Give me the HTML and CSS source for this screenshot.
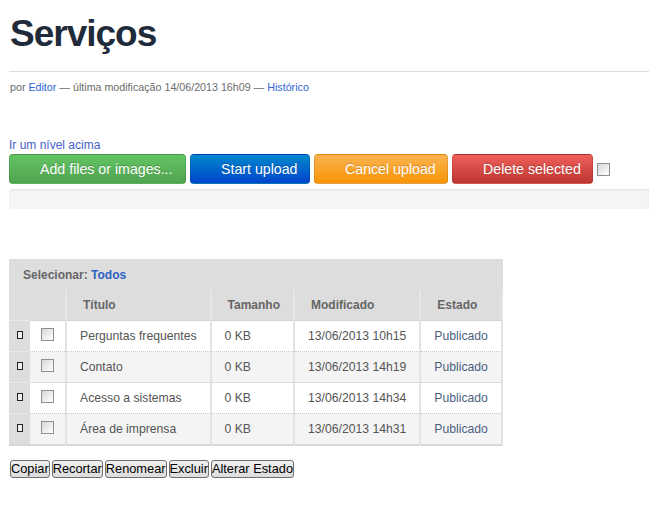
FILE: index.html
```html
<!DOCTYPE html>
<html lang="pt-br">
<head>
  <meta charset="UTF-8" />
  <title>Serviços</title>
  <link rel="stylesheet" href="styles.css">
</head>
<body>

  <!-- CABECALHO -->
  <h1 class="title">Serviços</h1>
  <div class="byline">
    por <a href="#">Editor</a> — última modificação 14/06/2013 16h09 — <a href="#">Histórico</a>
  </div>

  <a class="up-link" href="#">Ir um nível acima</a>

  <!-- UPLOAD -->
  <div class="upload-bar">
    <span class="btn btn-success">Add files or images...</span>
    <span class="btn btn-primary">Start upload</span>
    <span class="btn btn-warning">Cancel upload</span>
    <span class="btn btn-danger">Delete selected</span>
    <input type="checkbox" class="check" />
  </div>
  <div class="progress"></div>

  <!-- LISTAGEM -->
  <table class="listing">
    <tr class="select-row">
      <th colspan="6">Selecionar: <a href="#">Todos</a></th>
    </tr>
    <tr class="head-row">
      <th class="drag"></th>
      <th class="box"></th>
      <th>Título</th>
      <th>Tamanho</th>
      <th>Modificado</th>
      <th>Estado</th>
    </tr>
    <tr>
      <td class="drag"><span class="handle"></span></td>
      <td class="box"><input type="checkbox" class="check" /></td>
      <td>Perguntas frequentes</td>
      <td>0 KB</td>
      <td>13/06/2013 10h15</td>
      <td class="state">Publicado</td>
    </tr>
    <tr class="even">
      <td class="drag"><span class="handle"></span></td>
      <td class="box"><input type="checkbox" class="check" /></td>
      <td>Contato</td>
      <td>0 KB</td>
      <td>13/06/2013 14h19</td>
      <td class="state">Publicado</td>
    </tr>
    <tr>
      <td class="drag"><span class="handle"></span></td>
      <td class="box"><input type="checkbox" class="check" /></td>
      <td>Acesso a sistemas</td>
      <td>0 KB</td>
      <td>13/06/2013 14h34</td>
      <td class="state">Publicado</td>
    </tr>
    <tr class="even">
      <td class="drag"><span class="handle"></span></td>
      <td class="box"><input type="checkbox" class="check" /></td>
      <td>Área de imprensa</td>
      <td>0 KB</td>
      <td>13/06/2013 14h31</td>
      <td class="state">Publicado</td>
    </tr>
  </table>

  <div class="actions"><button class="plain">Copiar</button><button class="plain">Recortar</button><button class="plain">Renomear</button><button class="plain">Excluir</button><button class="plain">Alterar Estado</button></div>

</body>
</html>
```

FILE: styles.css
```css
body {
  font-family: "Liberation Sans", Arial, sans-serif;
  background: white;
  margin: 0;
  padding: 0 0 0 9px;
  overflow: hidden;
}
a {
  text-decoration: none;
}
.title {
  font-size: 37px;
  letter-spacing: -1px;
  line-height: 44px;
  color: #1f2b3a;
  margin: 12px 0 0 1px;
}
.byline {
  border-top: 1px solid #dddddd;
  margin-top: 15px;
  padding-top: 8px;
  padding-left: 1px;
  font-size: 10.7px;
  line-height: 14px;
  color: #6b6b6b;
}
.byline a {
  color: #2f63d6;
}
.up-link {
  display: block;
  margin-top: 44px;
  font-size: 12px;
  line-height: 15px;
  color: #4562c8;
}
.upload-bar {
  display: flex;
  align-items: center;
  gap: 4px;
  margin-top: 1px;
}
.btn {
  display: inline-block;
  height: 30px;
  line-height: 29px;
  padding: 0 0 0 30px;
  font-size: 14.2px;
  color: white;
  border-radius: 4px;
  border: 1px solid rgba(0,0,0,0.1);
  box-sizing: border-box;
  white-space: nowrap;
  text-shadow: 0 -1px 0 rgba(0,0,0,0.2);
}
.btn-success {
  width: 177px;
  background: linear-gradient(#62c462, #51a351);
}
.btn-primary {
  width: 120px;
  background: linear-gradient(#0088cc, #0044cc);
}
.btn-warning {
  width: 134px;
  background: linear-gradient(#fbb450, #f89406);
}
.btn-danger {
  width: 141px;
  background: linear-gradient(#ee5f5b, #bd362f);
}
.check {
  appearance: none;
  -webkit-appearance: none;
  width: 13px;
  height: 13px;
  margin: 0;
  border: 1px solid #8f8f8f;
  background: linear-gradient(135deg, #d8d8d8, #ffffff);
  box-sizing: border-box;
}
.progress {
  margin-top: 5px;
  height: 20px;
  background: #f5f5f5;
  border-radius: 4px 0 0 4px;
  box-shadow: inset 0 1px 2px rgba(0,0,0,0.08);
}
.listing {
  margin-top: 50px;
  border-collapse: collapse;
  background: #dddddd;
  font-size: 12.2px;
  color: #555555;
  border-bottom: 2px solid #d6d6d6;
}
.listing th {
  text-align: left;
  font-size: 12px;
  color: #666666;
  padding: 0 13px 0 16px;
  border-right: 2px solid #e6e6e6;
}
.select-row th {
  height: 31px;
  padding-left: 14px;
  border-right: none;
}
.select-row a {
  color: #2d62c4;
}
.head-row th {
  height: 30px;
}
.listing td {
  height: 30px;
  padding: 0 13px;
  background: white;
  border-right: 2px solid #e3e3e3;
  border-top: 1px dotted #c8c8c8;
  white-space: nowrap;
}
.listing tr.even td {
  background: #f4f4f4;
}
.listing .drag {
  width: 21px;
  padding: 0;
  background: #dddddd;
  border-right: none;
  text-align: center;
}
.listing td.drag {
  background: #dddddd;
  border-top: 1px solid #e8e8e8;
}
.listing tr.even td.drag {
  background: #dddddd;
}
.handle {
  display: inline-block;
  width: 4px;
  height: 6px;
  border: 1px solid #222222;
  background: #eeeeee;
  position: relative;
  top: -1px;
}
.listing .box {
  width: 35px;
  padding: 0;
  text-align: center;
}
.listing td.box .check {
  vertical-align: middle;
  position: relative;
  top: -2px;
}
.listing td.state {
  color: #4d5f7f;
}
.actions {
  margin-top: 13px;
  margin-left: 1px;
}
.plain {
  font-family: "Liberation Sans", Arial, sans-serif;
  font-size: 12.8px;
  height: 18px;
  line-height: 15px;
  padding: 0;
  margin: 0 2px 0 0;
  color: black;
  background: linear-gradient(#f0f0f0, #dcdcdc);
  border: 1px solid #707070;
  border-radius: 3px;
}
```
